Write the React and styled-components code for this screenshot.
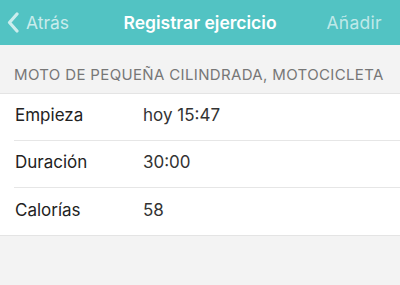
import React from "react";
import styled, { createGlobalStyle } from "styled-components";

const Global = createGlobalStyle`
  html, body { margin: 0; padding: 0; background: #f3f3f3; }
  body { font-family: Inter, "Open Sans", "Liberation Sans", sans-serif; -webkit-font-smoothing: antialiased; }
  * { box-sizing: border-box; }
`;

const Screen = styled.div`
  width: 400px;
  height: 285px;
  background: #f3f3f3;
  overflow: hidden;
`;

const NavBar = styled.div`
  height: 45px;
  background: #52c3c3;
  display: grid;
  grid-template-columns: 1fr auto 1fr;
  align-items: center;
  padding: 0 7px;
`;

const Back = styled.div`
  display: flex;
  align-items: center;
  gap: 7px;
  color: rgba(255, 255, 255, 0.7);
  font-size: 17.5px;
`;

const Title = styled.div`
  color: #fff;
  font-size: 17.5px;
  font-weight: 600;
`;

const Action = styled.div`
  justify-self: end;
  margin-right: 11px;
  color: rgba(255, 255, 255, 0.65);
  font-size: 17.5px;
  letter-spacing: 0.3px;
`;

const SectionHeader = styled.div`
  height: 48px;
  padding: 20px 0 0 14px;
  font-size: 15px;
  letter-spacing: 0.35px;
  color: #777;
  text-transform: uppercase;
  white-space: nowrap;
`;

const List = styled.div`
  background: #fff;
  border-top: 1px solid #e4e4e4;
  border-bottom: 1px solid #e4e4e4;
  padding-left: 14px;
`;

const Row = styled.div`
  height: 47px;
  display: grid;
  grid-template-columns: 129px 1fr;
  align-items: center;
  padding-bottom: 4px;
  border-bottom: ${(p) => (p.$last ? "none" : "1px solid #e6e6e6")};
  font-size: 17px;
  color: #222;
`;

const Label = styled.div`
  padding-left: 1px;
`;

const Value = styled.div`
  color: #333;
`;

const rows = [
  ["Empieza", "hoy 15:47"],
  ["Duración", "30:00"],
  ["Calorías", "58"],
];

export default function App() {
  return (
    <Screen>
      <Global />
      <NavBar>
        <Back>
          <svg width="12" height="21" viewBox="0 0 12 21">
            <path d="M10 2 L2.5 10.5 L10 19" fill="none" stroke="rgba(255,255,255,0.7)" strokeWidth="3.2" strokeLinecap="round" strokeLinejoin="round" />
          </svg>
          Atrás
        </Back>
        <Title>Registrar ejercicio</Title>
        <Action>Añadir</Action>
      </NavBar>
      <SectionHeader>Moto de pequeña cilindrada, motocicleta</SectionHeader>
      <List>
        {rows.map(([l, v], i) => (
          <Row key={l} $last={i === rows.length - 1}>
            <Label>{l}</Label>
            <Value>{v}</Value>
          </Row>
        ))}
      </List>
    </Screen>
  );
}
